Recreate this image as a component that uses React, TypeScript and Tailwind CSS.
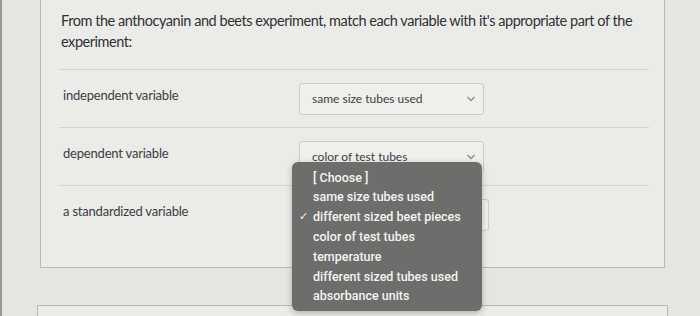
import React from "react";

const Chevron = () => (
  <svg width="10" height="7" viewBox="0 0 10 7" className="absolute right-[7px] top-1/2 -translate-y-1/2">
    <path d="M1.5 1.5 L5 5 L8.5 1.5" fill="none" stroke="#8a8a88" strokeWidth="1.3" />
  </svg>
);

const Select = ({ value, w }: { value: string; w: string }) => (
  <div className={`relative ${w} h-[32px] border border-[#cdccc8] rounded-[3px] bg-[#efefec] flex items-center pl-[12px] text-[12px] text-[#3b3f44]`}>
    <span>{value}</span>
    <Chevron />
  </div>
);

const Row = ({ label, value, w }: { label: string; value: string; w: string }) => (
  <div className="flex items-center h-[57px]">
    <div className="w-[240px] pl-[4px] text-[13px] tracking-[-0.2px] text-[#3a3e42] -mt-[5px]">{label}</div>
    <Select value={value} w={w} />
  </div>
);

export default function App() {
  const items = [
    "[ Choose ]",
    "same size tubes used",
    "different sized beet pieces",
    "color of test tubes",
    "temperature",
    "different sized tubes used",
    "absorbance units",
  ];
  return (
    <div
      className="relative w-[700px] h-[316px] overflow-hidden bg-[#e6e5e1]"
      style={{ fontFamily: "Lato, 'Liberation Sans', sans-serif" }}
    >
      <div className="absolute left-0 top-0 w-[2px] h-full bg-[#9a9894]" />
      <div className="ml-[40px] w-[625px] h-[268px] border-x border-b border-[#b9b8b3] bg-[#ebebe8] pt-[10px]">
        <p className="pl-[20px] pr-[10px] text-[14.5px] tracking-[-0.45px] leading-[21px] text-[#2f3235]">
          From the anthocyanin and beets experiment, match each variable with it's appropriate part of the experiment:
        </p>
        <div className="mt-[17px] ml-[18px] mr-[15px]">
          <div className="border-t border-[#d3d2ce]" />
          <Row label="independent variable" value="same size tubes used" w="w-[185px]" />
          <div className="border-t border-[#d3d2ce]" />
          <Row label="dependent variable" value="color of test tubes" w="w-[185px]" />
          <div className="border-t border-[#d3d2ce]" />
          <Row label="a standardized variable" value="" w="w-[190px]" />
        </div>
      </div>
      <div className="ml-[37px] mt-[37px] w-[631px] h-[20px] border-x border-t border-[#b9b8b3] bg-[#ebebe8]" />

      <div
        className="absolute left-[292px] top-[162px] w-[190px] h-[149px] rounded-[6px] bg-[#6d6d6c] pt-[6px] shadow-[0_2px_6px_rgba(0,0,0,0.25)]"
        style={{ fontFamily: "Roboto, 'Noto Sans', sans-serif" }}
      >
        {items.map((t, i) => (
          <div key={t} className="relative h-[19.8px] flex items-center pl-[21px] text-[12.5px] font-medium text-[#f4f4f2]">
            {i === 2 && <span className="absolute left-[7px] text-[11px]">✓</span>}
            {t}
          </div>
        ))}
      </div>
    </div>
  );
}
